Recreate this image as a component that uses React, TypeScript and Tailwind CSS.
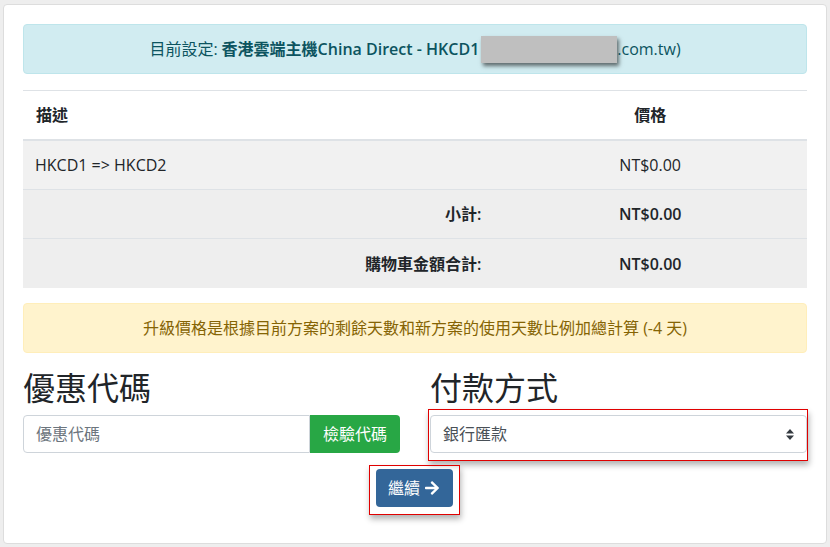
import React from "react";
import { FaArrowRight } from "react-icons/fa";

export default function App() {
  return (
    <div className="w-[830px] h-[547px] bg-[#eeeeee] pt-[4px] px-[3px] font-['Open_Sans','Noto_Sans_CJK_TC',sans-serif] text-[16px] leading-[24px] text-[#212529]">
      <div className="w-[824px] h-[540px] bg-white border border-[#dddddd] rounded-[4px] p-[19px]">
        {/* info alert */}
        <div className="h-[50px] bg-[#d1ecf1] border border-[#bee5eb] rounded-[4px] text-[#0c5460] flex items-center justify-center mb-[16px]">
          <span>目前設定: </span>
          <span className="font-semibold ml-[4px]">香港雲端主機China Direct - HKCD1</span>
          <span className="inline-block w-[136px] h-[27px] ml-[2px] bg-[#bfbfbf] shadow-[2px_3px_4px_rgba(0,0,0,0.55)]"></span>
          <span>.com.tw)</span>
        </div>

        {/* table */}
        <div className="border-t border-[#dee2e6] mb-[15px]">
          <div className="flex h-[50px] border-b-2 border-[#dee2e6] font-semibold">
            <div className="w-[60%] px-[13px] flex items-center">描述</div>
            <div className="flex-1 px-[12px] flex items-center justify-center">價格</div>
          </div>
          <div className="flex h-[49px] bg-[#f1f1f1] border-b border-[#dee2e6]">
            <div className="w-[60%] px-[12px] flex items-center">HKCD1 =&gt; HKCD2</div>
            <div className="flex-1 px-[12px] flex items-center justify-center">NT$0.00</div>
          </div>
          <div className="flex h-[49px] bg-[#eeeeee] border-b border-[#dee2e6] font-semibold">
            <div className="w-[60%] px-[12px] flex items-center justify-end">小計:</div>
            <div className="flex-1 px-[12px] flex items-center justify-center">NT$0.00</div>
          </div>
          <div className="flex h-[49px] bg-[#eeeeee] font-semibold">
            <div className="w-[60%] px-[12px] flex items-center justify-end">購物車金額合計:</div>
            <div className="flex-1 px-[12px] flex items-center justify-center">NT$0.00</div>
          </div>
        </div>

        {/* warning alert */}
        <div className="h-[50px] bg-[#fff3cd] border border-[#ffeeba] rounded-[4px] text-[#856404] flex items-center justify-center mb-[16px]">
          升級價格是根據目前方案的剩餘天數和新方案的使用天數比例加總計算 (-4 天)
        </div>

        {/* two columns */}
        <div className="grid grid-cols-2 gap-[30px]">
          <div>
            <h2 className="text-[32px] leading-[38px] font-normal mb-[8px]">優惠代碼</h2>
            <div className="flex h-[38px]">
              <div className="flex-1 border border-[#ced4da] rounded-l-[4px] flex items-center px-[12px] text-[#6c757d]">優惠代碼</div>
              <div className="w-[90px] bg-[#28a745] text-white rounded-r-[4px] flex items-center justify-center">檢驗代碼</div>
            </div>
          </div>
          <div>
            <h2 className="text-[32px] leading-[38px] font-normal mb-[8px]">付款方式</h2>
            <div className="relative">
              <div className="absolute left-[-2px] right-[-1px] top-[-6px] bottom-[-8px] border border-[#e00000] shadow-[1px_4px_6px_rgba(0,0,0,0.3)]"></div>
              <div className="relative h-[38px] bg-white border border-[#ced4da] rounded-[4px] flex items-center justify-between pl-[12px] pr-[12px] text-[#495057]">
                <span>銀行匯款</span>
                <svg width="8" height="11" viewBox="0 0 8 11">
                  <path d="M4 0 L8 4.5 L0 4.5 Z" fill="#343a40" />
                  <path d="M0 6.5 L8 6.5 L4 11 Z" fill="#343a40" />
                </svg>
              </div>
            </div>
          </div>
        </div>

        <div className="flex justify-center mt-[16px]">
          <div className="relative -translate-x-[1px]">
            <div className="absolute left-[-7px] right-[-7px] top-[-4px] bottom-[-8px] border border-[#e00000] shadow-[1px_4px_6px_rgba(0,0,0,0.3)]"></div>
            <div className="relative h-[38px] w-[77px] bg-[#336699] rounded-[4px] text-white flex items-center justify-center gap-[4px]">
              <span>繼續</span>
              <FaArrowRight size={16} />
            </div>
          </div>
        </div>
      </div>
    </div>
  );
}
